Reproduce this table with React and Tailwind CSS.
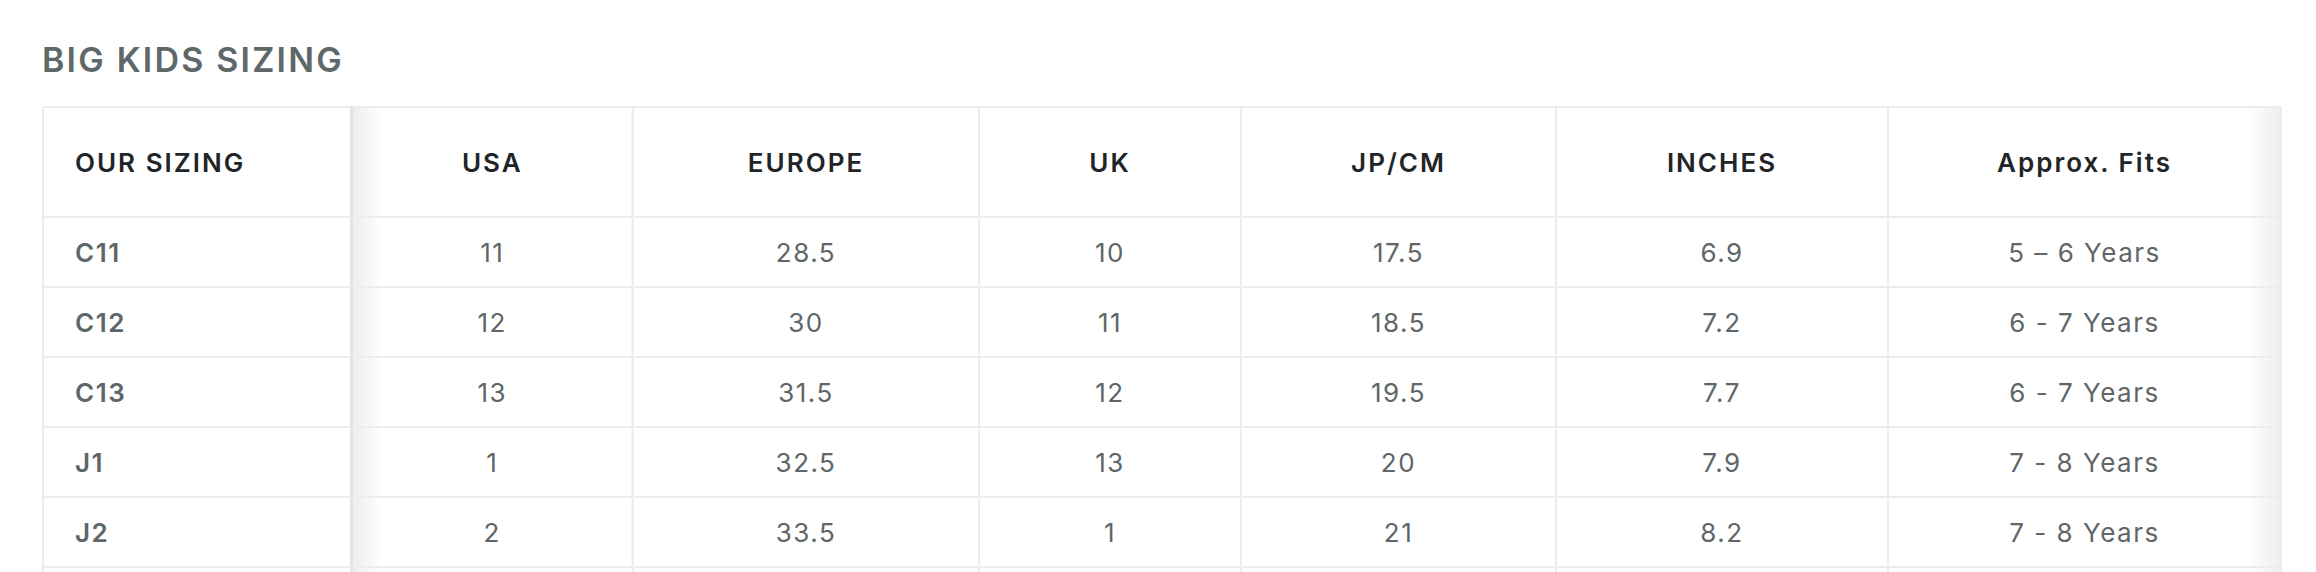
const HEADERS = ["OUR SIZING", "USA", "EUROPE", "UK", "JP/CM", "INCHES", "Approx. Fits"];
const WIDTHS = [308, 282, 346, 262, 315, 332, 393];

const ROWS = [
  ["C11", "11", "28.5", "10", "17.5", "6.9", "5 – 6 Years"],
  ["C12", "12", "30", "11", "18.5", "7.2", "6 - 7 Years"],
  ["C13", "13", "31.5", "12", "19.5", "7.7", "6 - 7 Years"],
  ["J1", "1", "32.5", "13", "20", "7.9", "7 - 8 Years"],
  ["J2", "2", "33.5", "1", "21", "8.2", "7 - 8 Years"],
];

function cellClass(i) {
  // first column is sticky-looking, with a shadow falling on the next one
  if (i === 0) return "text-left pl-[31px] border-r-[3px] border-r-[#e2e5e5]";
  if (i === 1) return "text-center bg-[linear-gradient(to_right,#ececec,#ffffff_30px)]";
  if (i === 6) return "text-center bg-[linear-gradient(to_left,#eeeeee,#ffffff_34px)]";
  return "text-center";
}

export default function App() {
  return (
    <div className="w-[2316px] h-[572px] overflow-hidden bg-white font-['Inter',sans-serif]">
      <div className="pl-[42px] pt-[40px]">
        <h2 className="text-[34px] leading-[40px] font-semibold tracking-[2.2px] text-[#5f6869]">
          BIG KIDS SIZING
        </h2>
        <table className="mt-[26px] table-fixed border-collapse border-2 border-[#eceeee] w-[2240px]">
          <colgroup>
            {WIDTHS.map((w, i) => (
              <col key={i} style={{ width: w }} />
            ))}
          </colgroup>
          <thead>
            <tr className="h-[110px]">
              {HEADERS.map((h, i) => (
                <th
                  key={h}
                  className={`border-2 border-[#eceeee] font-semibold text-[26px] tracking-[2px] text-[#222527] ${cellClass(i)}`}
                >
                  {h}
                </th>
              ))}
            </tr>
          </thead>
          <tbody>
            {ROWS.map((row) => (
              <tr key={row[0]} className="h-[70px]">
                {row.map((v, i) => (
                  <td
                    key={i}
                    className={`border-2 border-[#eceeee] text-[26px] tracking-[1.5px] text-[#5e6668] ${
                      i === 0 ? "font-semibold" : "font-normal"
                    } ${cellClass(i)}`}
                  >
                    {v}
                  </td>
                ))}
              </tr>
            ))}
            <tr className="h-[70px]">
              {WIDTHS.map((w, i) => (
                <td key={i} className={`border-2 border-[#eceeee] ${cellClass(i)}`}></td>
              ))}
            </tr>
          </tbody>
        </table>
      </div>
    </div>
  );
}
